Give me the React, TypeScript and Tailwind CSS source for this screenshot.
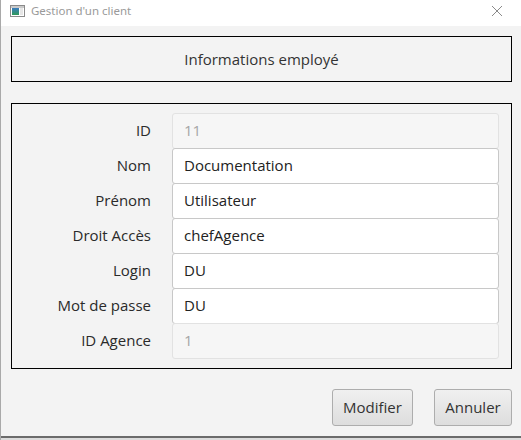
import React from "react";

const rows: { label: string; value: string; disabled?: boolean }[] = [
  { label: "ID", value: "11", disabled: true },
  { label: "Nom", value: "Documentation" },
  { label: "Prénom", value: "Utilisateur" },
  { label: "Droit Accès", value: "chefAgence" },
  { label: "Login", value: "DU" },
  { label: "Mot de passe", value: "DU" },
  { label: "ID Agence", value: "1", disabled: true },
];

export default function App() {
  return (
    <div
      className="w-[521px] h-[440px] bg-[#f3f3f3] flex flex-col overflow-hidden border-l border-[#a9a9a9]"
      style={{ fontFamily: '"Open Sans", "Noto Sans", sans-serif' }}
    >
      <div className="h-[26px] bg-white flex items-center pb-[4px] shrink-0">
        <svg width="15" height="12" viewBox="0 0 15 12" className="ml-[9px]">
          <rect x="0.5" y="0.5" width="14" height="11" fill="#ffffff" stroke="#8a8a8a" />
          <rect x="1" y="1" width="13" height="2" fill="#c9c9c9" />
          <defs>
            <linearGradient id="g" x1="0" y1="0" x2="0" y2="1">
              <stop offset="0" stopColor="#3a7bbf" />
              <stop offset="1" stopColor="#2f9a5a" />
            </linearGradient>
          </defs>
          <rect x="2" y="3" width="7" height="7" fill="url(#g)" />
          <rect x="10" y="3" width="3" height="7" fill="#e6e6e6" />
        </svg>
        <span className="ml-[6px] text-[11.5px] text-[#9a9a9a]" style={{ fontFamily: '"Noto Sans", sans-serif' }}>
          Gestion d'un client
        </span>
        <svg width="12" height="12" viewBox="0 0 12 12" className="ml-auto mr-[18px]">
          <path d="M1 1 L11 11 M11 1 L1 11" stroke="#8a8a8a" strokeWidth="1" />
        </svg>
      </div>
      <div className="flex flex-col pl-[10px] pt-[10px]">
        <div className="w-[501px] h-[46px] border border-black flex items-center justify-center text-[15px] text-[#333]">
          Informations employé
        </div>
        <div className="mt-[21px] w-[501px] h-[266px] border border-black pt-[9px] flex flex-col">
          {rows.map((r) => (
            <div key={r.label} className="flex items-center h-[35px]">
              <div className="w-[139px] text-right text-[15px] text-[#2a2a2a]">{r.label}</div>
              <div
                className={
                  r.disabled
                    ? "ml-[21px] w-[327px] h-[36px] rounded-[3px] border border-[#e2e2e2] bg-[#f6f6f6] flex items-center pl-[11px] text-[15px] text-[#a5a5a5]"
                    : "ml-[21px] w-[327px] h-[36px] rounded-[3px] border border-[#c8c8c8] bg-white flex items-center pl-[11px] text-[15px] text-[#222]"
                }
              >
                {r.value}
              </div>
            </div>
          ))}
        </div>
        <div className="mt-[20px] flex justify-end gap-[21px] w-[501px]">
          <button className="w-[81px] h-[37px] rounded-[3px] border border-[#adadad] bg-gradient-to-b from-[#f0f0f0] to-[#dddddd] text-[15px] text-[#333]">
            Modifier
          </button>
          <button className="w-[78px] h-[37px] rounded-[3px] border border-[#adadad] bg-gradient-to-b from-[#f0f0f0] to-[#dddddd] text-[15px] text-[#333]">
            Annuler
          </button>
        </div>
      </div>
      <div className="mt-auto h-[4px] border-t-2 border-[#6b6b6b] bg-[#dcdcdc]" />
    </div>
  );
}
